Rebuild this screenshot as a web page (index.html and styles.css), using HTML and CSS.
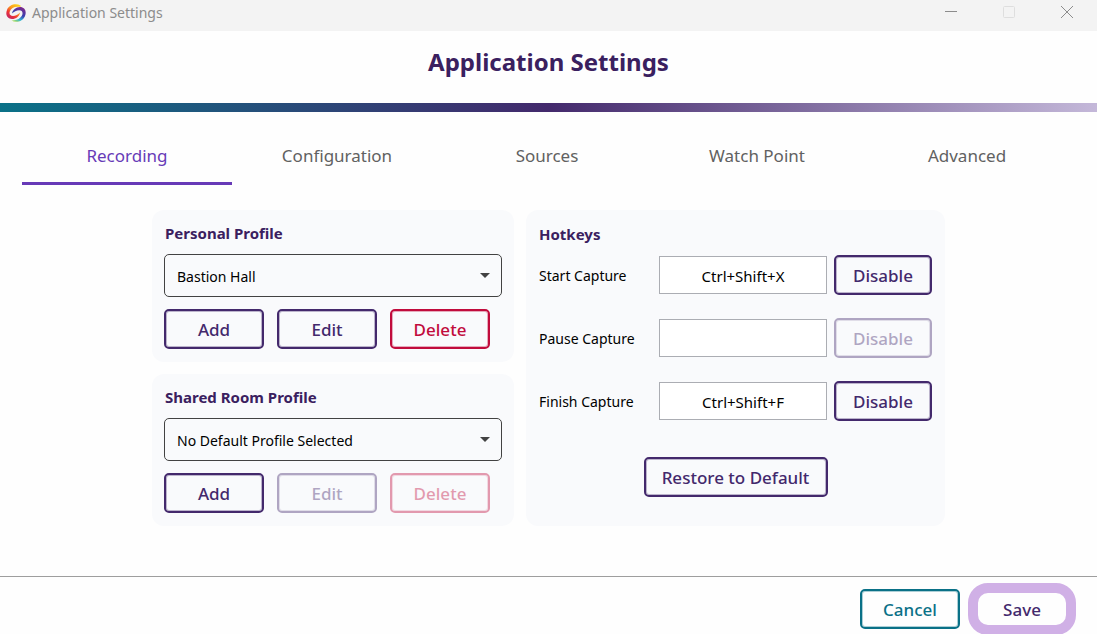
FILE: index.html
```html
<!DOCTYPE html>
<html lang="en">
<head>
<meta charset="utf-8">
<meta name="viewport" content="width=device-width, initial-scale=1">
<title>Application Settings</title>
<link rel="stylesheet" href="styles.css">
</head>
<body>
<div class="window">
  <div class="titlebar">
    <svg class="logo" viewBox="0 0 20 18" aria-hidden="true">
      <defs>
        <linearGradient id="warm" x1="1" y1="0" x2="0.3" y2="1">
          <stop offset="0" stop-color="#ffe11a"/>
          <stop offset="0.45" stop-color="#fb9a1c"/>
          <stop offset="0.75" stop-color="#ee3434"/>
          <stop offset="1" stop-color="#c4265f"/>
        </linearGradient>
        <linearGradient id="cool" x1="0.6" y1="0" x2="0.2" y2="1">
          <stop offset="0" stop-color="#7a2a8c"/>
          <stop offset="0.45" stop-color="#3a3fb0"/>
          <stop offset="0.75" stop-color="#2fb4d8"/>
          <stop offset="1" stop-color="#b5e04a"/>
        </linearGradient>
      </defs>
      <path fill="url(#warm)" d="M14.500 1.500C10 -1 3 0.500 1 6C-1 11 1.500 15 6 15C10 15 13.500 12.500 14 8.500C12 10.500 9.500 12 7 12C4 12 3 10 3.800 7.500C5 4 9 2 14.500 3z"/>
      <path fill="url(#cool)" d="M6 9.500C6.500 6 10 3 14 3C18.500 3 21 7 19 12C17 17 10.500 19.500 5.500 16.500C10.500 16.800 15 14.500 16.300 10.800C17 8 16 6.200 13.200 6.200C10.500 6.200 8 7.500 6 9.500z"/>
    </svg>
    <span class="titlebar-text">Application Settings</span>
    <div class="window-controls">
      <button class="window-button" aria-label="Minimize"><svg viewBox="0 0 14 14"><path d="M1 5.500h12"/></svg></button>
      <button class="window-button faint" aria-label="Maximize" disabled><svg viewBox="0 0 14 14"><rect x="1.500" y="0.500" width="11" height="11" rx="1"/></svg></button>
      <button class="window-button" aria-label="Close"><svg viewBox="0 0 14 14"><path d="M1 0l12 12M13 0L1 12"/></svg></button>
    </div>
  </div>
  <header class="header"><h1>Application Settings</h1></header>
  <nav class="tabs">
    <a class="tab active" href="#recording">Recording</a>
    <a class="tab" href="#configuration">Configuration</a>
    <a class="tab" href="#sources">Sources</a>
    <a class="tab" href="#watch-point">Watch Point</a>
    <a class="tab" href="#advanced">Advanced</a>
  </nav>
  <main class="content">
    <div class="profiles">
      <section class="panel">
        <h2><label for="personal">Personal Profile</label></h2>
        <div class="dropdown">
          <select id="personal"><option>Bastion Hall</option></select>
          <svg class="arrow" viewBox="0 0 10 5" aria-hidden="true"><path d="M0 0h10L5 5z"/></svg>
        </div>
        <div class="actions">
          <button class="button">Add</button>
          <button class="button">Edit</button>
          <button class="button danger">Delete</button>
        </div>
      </section>
      <section class="panel">
        <h2><label for="shared">Shared Room Profile</label></h2>
        <div class="dropdown">
          <select id="shared"><option>No Default Profile Selected</option></select>
          <svg class="arrow" viewBox="0 0 10 5" aria-hidden="true"><path d="M0 0h10L5 5z"/></svg>
        </div>
        <div class="actions">
          <button class="button">Add</button>
          <button class="button" disabled>Edit</button>
          <button class="button danger" disabled>Delete</button>
        </div>
      </section>
    </div>
    <section class="panel hotkeys">
      <h2>Hotkeys</h2>
      <div class="hotkey-rows">
        <div class="hotkey">
          <label for="start">Start Capture</label>
          <input id="start" type="text" value="Ctrl+Shift+X">
          <button class="button">Disable</button>
        </div>
        <div class="hotkey">
          <label for="pause">Pause Capture</label>
          <input id="pause" type="text" value="">
          <button class="button" disabled>Disable</button>
        </div>
        <div class="hotkey">
          <label for="finish">Finish Capture</label>
          <input id="finish" type="text" value="Ctrl+Shift+F">
          <button class="button">Disable</button>
        </div>
      </div>
      <button class="button restore">Restore to Default</button>
    </section>
  </main>
  <footer class="footer">
    <button class="button cancel">Cancel</button>
    <button class="button save">Save</button>
  </footer>
</div>
</body>
</html>
```
FILE: styles.css
```css
* {
  box-sizing: border-box;
}

body {
  margin: 0;
  background: #fefefe;
  color: #000;
  font-family: "Noto Sans", "Open Sans", sans-serif;
  font-size: 14px;
  line-height: 20px;
}

button,
input,
select {
  font: inherit;
  color: inherit;
}

h1,
h2 {
  margin: 0;
  color: #3a205f;
}

.window {
  display: flex;
  flex-direction: column;
  min-height: 100vh;
}

.titlebar {
  display: flex;
  align-items: center;
  gap: 6px;
  height: 31px;
  padding: 0 16px 6px 6px;
  background: #f3f3f3;
  color: #8c8c8c;
}

.logo {
  width: 20px;
  height: 18px;
}

.window-controls {
  display: flex;
  gap: 30px;
  margin-left: auto;
}

.window-button {
  display: flex;
  padding: 7px;
  border: 0;
  background: none;
  color: #8c8c8c;
}

.window-button.faint {
  color: #dedede;
}

.window-button svg {
  width: 14px;
  height: 14px;
  fill: none;
  stroke: currentColor;
}

.header {
  display: flex;
  flex-direction: column;
  text-align: center;
}

.header h1 {
  padding: 15px 0 25px;
  font-size: 24px;
  line-height: 32px;
}

.header::after {
  content: "";
  height: 9px;
  background: linear-gradient(90deg, #0a7187, #43296c 50%, #c4b8d9);
}

.tabs {
  display: grid;
  grid-template-columns: repeat(5, 1fr);
  padding: 18px 25px 0 22px;
}

.tab {
  padding: 14px 0;
  border-bottom: 3px solid transparent;
  color: #616161;
  font-size: 17px;
  line-height: 24px;
  text-align: center;
  text-decoration: none;
}

.tab.active {
  border-color: #673ab7;
  color: #673ab7;
}

.content {
  display: flex;
  flex: 1;
  align-items: flex-start;
  justify-content: center;
  gap: 12px;
  padding: 25px 0;
}

.profiles {
  display: flex;
  flex-direction: column;
  gap: 12px;
}

.panel {
  padding: 11px 12px 13px;
  border-radius: 12px;
  background: #f9fafc;
}

.panel h2 {
  padding: 0 1px;
  font-size: 15px;
  line-height: 24px;
}

.dropdown {
  position: relative;
  margin: 9px 0 12px;
}

.dropdown select {
  display: block;
  width: 338px;
  height: 43px;
  padding: 2px 32px 0 12px;
  border: 1px solid #424242;
  border-radius: 5px;
  background: #f9fafc;
  appearance: none;
}

.arrow {
  position: absolute;
  top: 19px;
  right: 12px;
  width: 10px;
  height: 5px;
  fill: #424242;
  pointer-events: none;
}

.actions {
  display: flex;
  gap: 13px;
}

.button {
  width: 100px;
  height: 40px;
  padding: 1px 0 0;
  border: 2px solid #43296c;
  border-radius: 5px;
  background: transparent;
  box-shadow: inset 0 0 0 1px #43296c55;
  color: #43296c;
  font-size: 17px;
  font-weight: 500;
}

.button.danger {
  border-color: #c10b3c;
  box-shadow: inset 0 0 0 1px #c10b3c55;
  color: #c10b3c;
}

.button:disabled {
  opacity: 0.4;
}

.hotkeys {
  display: flex;
  flex-direction: column;
  padding: 12px 13px 29px;
}

.hotkeys h2 {
  padding: 0;
}

.hotkey-rows {
  display: flex;
  flex-direction: column;
  gap: 23px;
  margin: 9px 0 36px;
}

.hotkey {
  display: grid;
  grid-template-columns: 120px 168px 105px;
  align-items: center;
}

.hotkey label {
  padding-top: 2px;
}

.hotkey input {
  width: 168px;
  height: 38px;
  padding: 2px 0 0;
  border: 1px solid #abadb3;
  background: #fff;
  font-size: 15px;
  text-align: center;
}

.hotkey .button {
  width: 98px;
  margin-left: 7px;
}

.button.restore {
  align-self: center;
  width: 184px;
}

.footer {
  display: flex;
  justify-content: flex-end;
  align-items: flex-start;
  gap: 8px;
  height: 58px;
  padding: 6px 21px 0 0;
  overflow: hidden;
  border-top: 1px solid #9e9e9e;
}

.button.cancel {
  margin-top: 6px;
  border-color: #0a7187;
  box-shadow: inset 0 0 0 1px #0a718755;
  color: #0a7187;
}

.button.save {
  width: 108px;
  height: 52px;
  padding-top: 2px;
  border: 10px solid #d0b0e6;
  border-radius: 20px;
  box-shadow: none;
}
```
